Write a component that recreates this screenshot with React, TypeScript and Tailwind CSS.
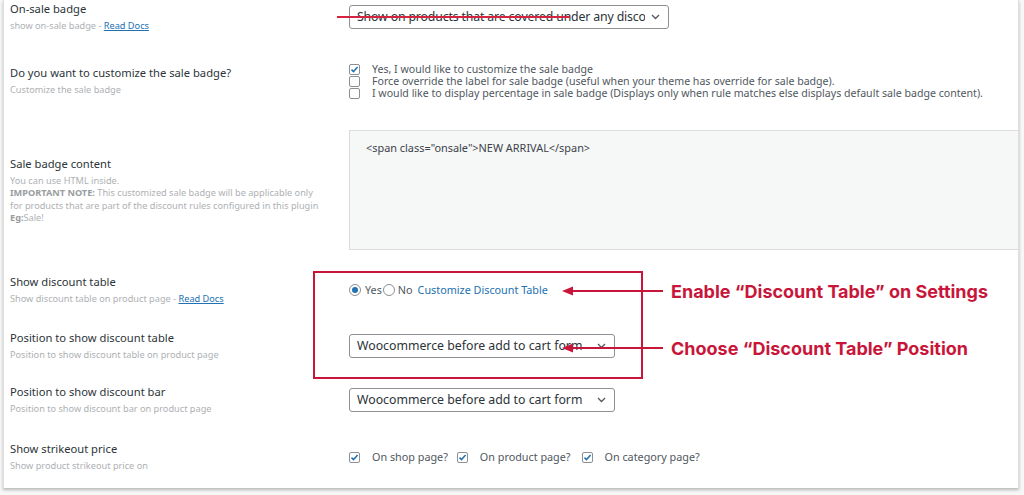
import type { ReactNode } from "react";

const RED = "#c8153a";

function Chevron() {
  return (
    <svg width="9" height="6" viewBox="0 0 9 6" className="shrink-0">
      <path d="M1 1l3.5 3.5L8 1" fill="none" stroke="#50575e" strokeWidth="1.3" />
    </svg>
  );
}

function Checkbox({ checked }: { checked?: boolean }) {
  return (
    <span className="flex h-[11px] w-[11px] shrink-0 items-center justify-center rounded-[2px] border border-[#8c8f94] bg-white">
      {checked && (
        <svg width="9" height="9" viewBox="0 0 9 9">
          <path d="M1.5 4.6l2 2L7.6 2" fill="none" stroke="#2271b1" strokeWidth="1.5" />
        </svg>
      )}
    </span>
  );
}

function Radio({ checked }: { checked?: boolean }) {
  return (
    <span className="flex h-[12px] w-[12px] shrink-0 items-center justify-center rounded-full border border-[#8c8f94] bg-white">
      {checked && <span className="h-[6px] w-[6px] rounded-full bg-[#2271b1]" />}
    </span>
  );
}

function Select({ value, width, tight }: { value: string; width: string; tight?: boolean }) {
  return (
    <div
      className={`flex h-[24px] ${width} items-center justify-between gap-[6px] rounded-[3px] border border-[#8c8f94] bg-white pl-[7px] pr-[8px] text-[12.3px] text-[#2c3338]`}
    >
      <span className={`min-w-0 overflow-hidden whitespace-nowrap ${tight ? "tracking-[-0.15px]" : ""}`}>{value}</span>
      <Chevron />
    </div>
  );
}

function Row({
  title,
  sub,
  height,
  children,
}: {
  title: string;
  sub: ReactNode;
  height: string;
  children: ReactNode;
}) {
  return (
    <div className={`flex ${height} items-center`}>
      <div className="w-[345px] shrink-0 pl-[6px]">
        <p className="text-[11.2px] leading-[16px] text-[#2c3338]">{title}</p>
        <div className="mt-[3px] text-[9.2px] leading-[12.5px] text-[#aeb1b4]">{sub}</div>
      </div>
      <div className="min-w-0 flex-1">{children}</div>
    </div>
  );
}

function ReadDocs() {
  return <span className="text-[#2271b1] underline">Read Docs</span>;
}

function Arrow({ top }: { top: string }) {
  return (
    <div className={`absolute left-[562px] ${top} flex h-[10px] w-[101px] items-center`}>
      <svg width="101" height="10" viewBox="0 0 101 10">
        <path d="M0 5L11 0.5V9.5Z" fill={RED} />
        <rect x="10" y="4" width="91" height="2" fill={RED} />
      </svg>
    </div>
  );
}

export default function App() {
  return (
    <div className="relative h-[495px] w-[1024px] overflow-hidden bg-[#f7f7f7] font-['Noto_Sans','Open_Sans',sans-serif]">
      <div className="ml-[3px] h-[488px] w-[1016px] border-x border-[#dedede] bg-white shadow-[0_2px_3px_rgba(0,0,0,0.25)]">
        <Row title="On-sale badge" sub={<>show on-sale badge - <ReadDocs /></>} height="h-[34px]">
          <Select value="Show on products that are covered under any discount rules" width="w-[320px]" tight />
        </Row>

        <Row title="Do you want to customize the sale badge?" sub="Customize the sale badge" height="h-[94px]">
          <div className="flex flex-col text-[10.6px] leading-[12px] text-[#50575e]">
            <label className="flex items-center gap-[12px]">
              <Checkbox checked />
              Yes, I would like to customize the sale badge
            </label>
            <label className="flex items-center gap-[12px]">
              <Checkbox />
              Force override the label for sale badge (useful when your theme has override for sale badge).
            </label>
            <label className="flex items-center gap-[12px]">
              <Checkbox />
              I would like to display percentage in sale badge (Displays only when rule matches else displays default sale badge content).
            </label>
          </div>
        </Row>

        <Row
          title="Sale badge content"
          height="h-[124px]"
          sub={
            <>
              <p>You can use HTML inside.</p>
              <p>
                <b className="font-bold text-[#9a9da0]">IMPORTANT NOTE:</b> This customized sale badge will be applicable only
              </p>
              <p>for products that are part of the discount rules configured in this plugin</p>
              <p>
                <b className="font-bold text-[#9a9da0]">Eg:</b>Sale!
              </p>
            </>
          }
        >
          <div className="h-[120px] w-full border border-r-0 border-[#dcdcde] bg-[#f6f7f7] px-[16px] py-[9px] text-[10.9px] text-[#3c434a]">
            {'<span class="onsale">NEW ARRIVAL</span>'}
          </div>
        </Row>

        <Row title="Show discount table" sub={<>Show discount table on product page - <ReadDocs /></>} height="h-[76px]">
          <div className="flex items-center text-[10.8px] text-[#50575e]">
            <Radio checked />
            <span className="ml-[4px]">Yes</span>
            <span className="ml-[1px]">
              <Radio />
            </span>
            <span className="ml-[3px]">No</span>
            <span className="ml-[5px] text-[#2271b1]">Customize Discount Table</span>
          </div>
        </Row>

        <Row title="Position to show discount table" sub="Position to show discount table on product page" height="h-[36px]">
          <Select value="Woocommerce before add to cart form" width="w-[266px]" />
        </Row>

        <Row title="Position to show discount bar" sub="Position to show discount bar on product page" height="h-[72px]">
          <Select value="Woocommerce before add to cart form" width="w-[266px]" />
        </Row>

        <Row title="Show strikeout price" sub="Show product strikeout price on" height="h-[42px]">
          <div className="flex items-center text-[10.8px] text-[#50575e]">
            <Checkbox checked />
            <span className="ml-[12px]">On shop page?</span>
            <span className="ml-[9px]">
              <Checkbox checked />
            </span>
            <span className="ml-[12px]">On product page?</span>
            <span className="ml-[11px]">
              <Checkbox checked />
            </span>
            <span className="ml-[12px]">On category page?</span>
          </div>
        </Row>
      </div>

      {/* annotations drawn over the screenshot */}
      <div className="absolute left-[337px] top-[16px] h-[1.5px] w-[233px] bg-[#d4243f]" />
      <div className="absolute left-[313px] top-[271px] h-[108px] w-[330px] border-2 border-[#c8153a]" />
      <Arrow top="top-[286px]" />
      <Arrow top="top-[343px]" />
      <div className="absolute left-[671px] top-[280px] font-['Inter',sans-serif] text-[18px] font-bold leading-[24px] text-[#c8153a]">
        Enable “Discount Table” on Settings
      </div>
      <div className="absolute left-[671px] top-[337px] font-['Inter',sans-serif] text-[18px] font-bold leading-[24px] text-[#c8153a]">
        Choose “Discount Table” Position
      </div>
    </div>
  );
}
